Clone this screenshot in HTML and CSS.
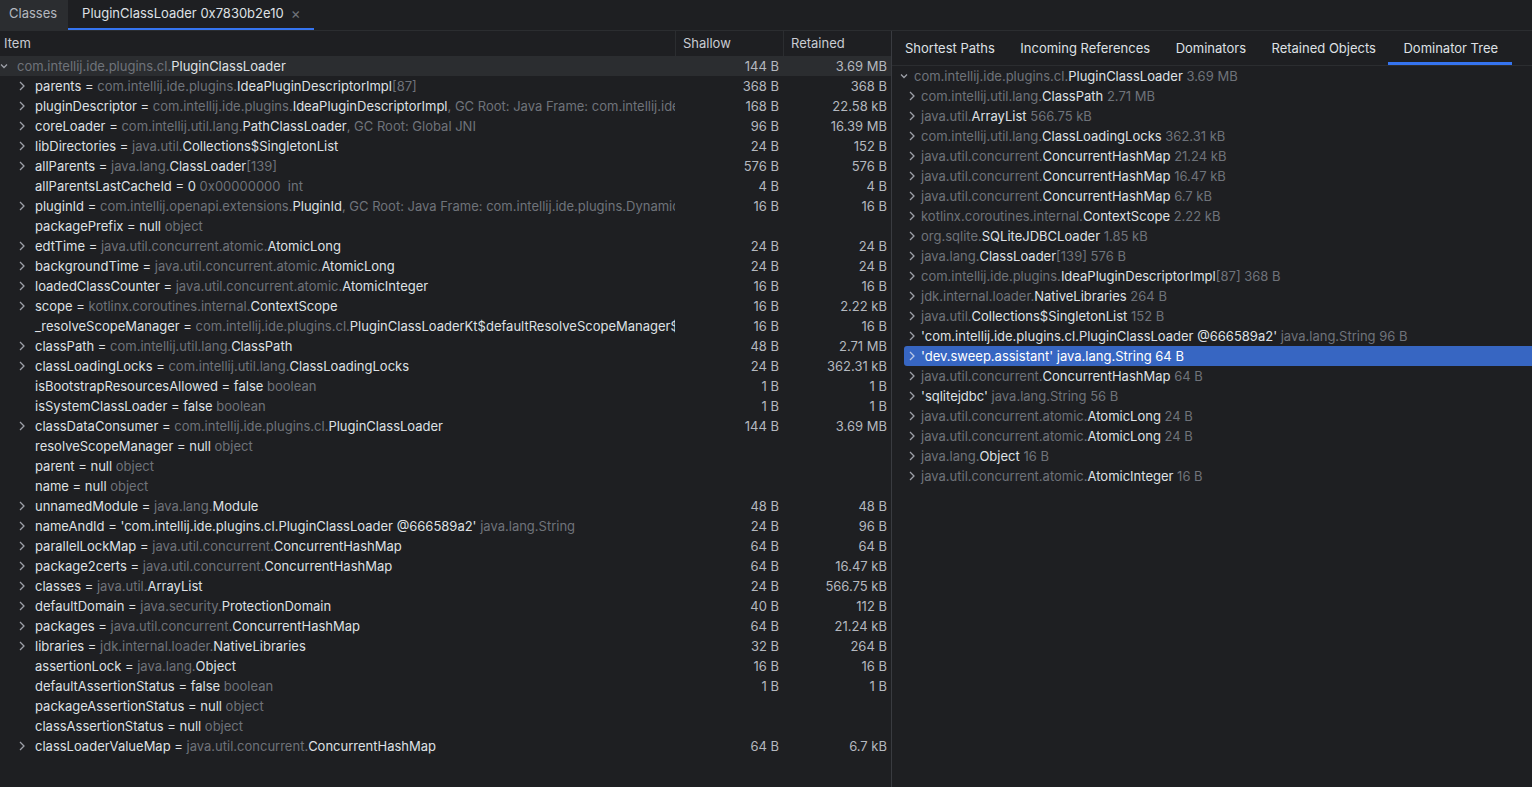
FILE: index.html
```html
<!DOCTYPE html>
<html lang="en">

<head>
  <meta charset="UTF-8">
  <title>PluginClassLoader 0x7830b2e10</title>
  <link rel="stylesheet" href="styles.css">
</head>

<body>

  <div class="tab-bar">
    <div class="tab">Classes</div>
    <div class="tab active">PluginClassLoader 0x7830b2e10 <span class="close">&#215;</span></div>
  </div>

  <div class="main">
    <!-- object fields -->
    <div class="left">
      <div class="head">
        <div class="col-item">Item</div>
        <div class="col-num">Shallow</div>
        <div class="col-num">Retained</div>
      </div>

      <div class="row hover">
        <div class="item d0"><span class="tog"><svg class="chev" viewBox="0 0 8 8"><path d="M1 2.5l3 3 3-3"/></svg></span><span class="dim">com.intellij.ide.plugins.cl.</span>PluginClassLoader</div>
        <div class="num">144 B</div><div class="num">3.69 MB</div>
      </div>
      <div class="row">
        <div class="item d1"><span class="tog"><svg class="chev" viewBox="0 0 8 10"><path d="M2 1l4 4-4 4"/></svg></span>parents = <span class="dim">com.intellij.ide.plugins.</span>IdeaPluginDescriptorImpl<span class="dim">[87]</span></div>
        <div class="num">368 B</div><div class="num">368 B</div>
      </div>
      <div class="row">
        <div class="item d1"><span class="tog"><svg class="chev" viewBox="0 0 8 10"><path d="M2 1l4 4-4 4"/></svg></span>pluginDescriptor = <span class="dim">com.intellij.ide.plugins.</span>IdeaPluginDescriptorImpl<span class="dim">, GC Root: Java Frame: com.intellij.ide</span></div>
        <div class="num">168 B</div><div class="num">22.58 kB</div>
      </div>
      <div class="row">
        <div class="item d1"><span class="tog"><svg class="chev" viewBox="0 0 8 10"><path d="M2 1l4 4-4 4"/></svg></span>coreLoader = <span class="dim">com.intellij.util.lang.</span>PathClassLoader<span class="dim">, GC Root: Global JNI</span></div>
        <div class="num">96 B</div><div class="num">16.39 MB</div>
      </div>
      <div class="row">
        <div class="item d1"><span class="tog"><svg class="chev" viewBox="0 0 8 10"><path d="M2 1l4 4-4 4"/></svg></span>libDirectories = <span class="dim">java.util.</span>Collections$SingletonList</div>
        <div class="num">24 B</div><div class="num">152 B</div>
      </div>
      <div class="row">
        <div class="item d1"><span class="tog"><svg class="chev" viewBox="0 0 8 10"><path d="M2 1l4 4-4 4"/></svg></span>allParents = <span class="dim">java.lang.</span>ClassLoader<span class="dim">[139]</span></div>
        <div class="num">576 B</div><div class="num">576 B</div>
      </div>
      <div class="row">
        <div class="item d1"><span class="tog"></span>allParentsLastCacheId = 0 <span class="dim">0x00000000&nbsp; int</span></div>
        <div class="num">4 B</div><div class="num">4 B</div>
      </div>
      <div class="row">
        <div class="item d1"><span class="tog"><svg class="chev" viewBox="0 0 8 10"><path d="M2 1l4 4-4 4"/></svg></span>pluginId = <span class="dim">com.intellij.openapi.extensions.</span>PluginId<span class="dim">, GC Root: Java Frame: com.intellij.ide.plugins.Dynamic</span></div>
        <div class="num">16 B</div><div class="num">16 B</div>
      </div>
      <div class="row">
        <div class="item d1"><span class="tog"></span>packagePrefix = null <span class="dim">object</span></div>
        <div class="num"></div><div class="num"></div>
      </div>
      <div class="row">
        <div class="item d1"><span class="tog"><svg class="chev" viewBox="0 0 8 10"><path d="M2 1l4 4-4 4"/></svg></span>edtTime = <span class="dim">java.util.concurrent.atomic.</span>AtomicLong</div>
        <div class="num">24 B</div><div class="num">24 B</div>
      </div>
      <div class="row">
        <div class="item d1"><span class="tog"><svg class="chev" viewBox="0 0 8 10"><path d="M2 1l4 4-4 4"/></svg></span>backgroundTime = <span class="dim">java.util.concurrent.atomic.</span>AtomicLong</div>
        <div class="num">24 B</div><div class="num">24 B</div>
      </div>
      <div class="row">
        <div class="item d1"><span class="tog"><svg class="chev" viewBox="0 0 8 10"><path d="M2 1l4 4-4 4"/></svg></span>loadedClassCounter = <span class="dim">java.util.concurrent.atomic.</span>AtomicInteger</div>
        <div class="num">16 B</div><div class="num">16 B</div>
      </div>
      <div class="row">
        <div class="item d1"><span class="tog"><svg class="chev" viewBox="0 0 8 10"><path d="M2 1l4 4-4 4"/></svg></span>scope = <span class="dim">kotlinx.coroutines.internal.</span>ContextScope</div>
        <div class="num">16 B</div><div class="num">2.22 kB</div>
      </div>
      <div class="row">
        <div class="item d1"><span class="tog"></span>_resolveScopeManager = <span class="dim">com.intellij.ide.plugins.cl.</span>PluginClassLoaderKt$defaultResolveScopeManager$</div>
        <div class="num">16 B</div><div class="num">16 B</div>
      </div>
      <div class="row">
        <div class="item d1"><span class="tog"><svg class="chev" viewBox="0 0 8 10"><path d="M2 1l4 4-4 4"/></svg></span>classPath = <span class="dim">com.intellij.util.lang.</span>ClassPath</div>
        <div class="num">48 B</div><div class="num">2.71 MB</div>
      </div>
      <div class="row">
        <div class="item d1"><span class="tog"><svg class="chev" viewBox="0 0 8 10"><path d="M2 1l4 4-4 4"/></svg></span>classLoadingLocks = <span class="dim">com.intellij.util.lang.</span>ClassLoadingLocks</div>
        <div class="num">24 B</div><div class="num">362.31 kB</div>
      </div>
      <div class="row">
        <div class="item d1"><span class="tog"></span>isBootstrapResourcesAllowed = false <span class="dim">boolean</span></div>
        <div class="num">1 B</div><div class="num">1 B</div>
      </div>
      <div class="row">
        <div class="item d1"><span class="tog"></span>isSystemClassLoader = false <span class="dim">boolean</span></div>
        <div class="num">1 B</div><div class="num">1 B</div>
      </div>
      <div class="row">
        <div class="item d1"><span class="tog"><svg class="chev" viewBox="0 0 8 10"><path d="M2 1l4 4-4 4"/></svg></span>classDataConsumer = <span class="dim">com.intellij.ide.plugins.cl.</span>PluginClassLoader</div>
        <div class="num">144 B</div><div class="num">3.69 MB</div>
      </div>
      <div class="row">
        <div class="item d1"><span class="tog"></span>resolveScopeManager = null <span class="dim">object</span></div>
        <div class="num"></div><div class="num"></div>
      </div>
      <div class="row">
        <div class="item d1"><span class="tog"></span>parent = null <span class="dim">object</span></div>
        <div class="num"></div><div class="num"></div>
      </div>
      <div class="row">
        <div class="item d1"><span class="tog"></span>name = null <span class="dim">object</span></div>
        <div class="num"></div><div class="num"></div>
      </div>
      <div class="row">
        <div class="item d1"><span class="tog"><svg class="chev" viewBox="0 0 8 10"><path d="M2 1l4 4-4 4"/></svg></span>unnamedModule = <span class="dim">java.lang.</span>Module</div>
        <div class="num">48 B</div><div class="num">48 B</div>
      </div>
      <div class="row">
        <div class="item d1"><span class="tog"><svg class="chev" viewBox="0 0 8 10"><path d="M2 1l4 4-4 4"/></svg></span>nameAndId = 'com.intellij.ide.plugins.cl.PluginClassLoader @666589a2' <span class="dim">java.lang.String</span></div>
        <div class="num">24 B</div><div class="num">96 B</div>
      </div>
      <div class="row">
        <div class="item d1"><span class="tog"><svg class="chev" viewBox="0 0 8 10"><path d="M2 1l4 4-4 4"/></svg></span>parallelLockMap = <span class="dim">java.util.concurrent.</span>ConcurrentHashMap</div>
        <div class="num">64 B</div><div class="num">64 B</div>
      </div>
      <div class="row">
        <div class="item d1"><span class="tog"><svg class="chev" viewBox="0 0 8 10"><path d="M2 1l4 4-4 4"/></svg></span>package2certs = <span class="dim">java.util.concurrent.</span>ConcurrentHashMap</div>
        <div class="num">64 B</div><div class="num">16.47 kB</div>
      </div>
      <div class="row">
        <div class="item d1"><span class="tog"><svg class="chev" viewBox="0 0 8 10"><path d="M2 1l4 4-4 4"/></svg></span>classes = <span class="dim">java.util.</span>ArrayList</div>
        <div class="num">24 B</div><div class="num">566.75 kB</div>
      </div>
      <div class="row">
        <div class="item d1"><span class="tog"><svg class="chev" viewBox="0 0 8 10"><path d="M2 1l4 4-4 4"/></svg></span>defaultDomain = <span class="dim">java.security.</span>ProtectionDomain</div>
        <div class="num">40 B</div><div class="num">112 B</div>
      </div>
      <div class="row">
        <div class="item d1"><span class="tog"><svg class="chev" viewBox="0 0 8 10"><path d="M2 1l4 4-4 4"/></svg></span>packages = <span class="dim">java.util.concurrent.</span>ConcurrentHashMap</div>
        <div class="num">64 B</div><div class="num">21.24 kB</div>
      </div>
      <div class="row">
        <div class="item d1"><span class="tog"><svg class="chev" viewBox="0 0 8 10"><path d="M2 1l4 4-4 4"/></svg></span>libraries = <span class="dim">jdk.internal.loader.</span>NativeLibraries</div>
        <div class="num">32 B</div><div class="num">264 B</div>
      </div>
      <div class="row">
        <div class="item d1"><span class="tog"></span>assertionLock = <span class="dim">java.lang.</span>Object</div>
        <div class="num">16 B</div><div class="num">16 B</div>
      </div>
      <div class="row">
        <div class="item d1"><span class="tog"></span>defaultAssertionStatus = false <span class="dim">boolean</span></div>
        <div class="num">1 B</div><div class="num">1 B</div>
      </div>
      <div class="row">
        <div class="item d1"><span class="tog"></span>packageAssertionStatus = null <span class="dim">object</span></div>
        <div class="num"></div><div class="num"></div>
      </div>
      <div class="row">
        <div class="item d1"><span class="tog"></span>classAssertionStatus = null <span class="dim">object</span></div>
        <div class="num"></div><div class="num"></div>
      </div>
      <div class="row">
        <div class="item d1"><span class="tog"><svg class="chev" viewBox="0 0 8 10"><path d="M2 1l4 4-4 4"/></svg></span>classLoaderValueMap = <span class="dim">java.util.concurrent.</span>ConcurrentHashMap</div>
        <div class="num">64 B</div><div class="num">6.7 kB</div>
      </div>
    </div>

    <!-- dominator tree -->
    <div class="right">
      <div class="sub-tabs">
        <div class="sub-tab">Shortest Paths</div>
        <div class="sub-tab">Incoming References</div>
        <div class="sub-tab">Dominators</div>
        <div class="sub-tab">Retained Objects</div>
        <div class="sub-tab active">Dominator Tree</div>
      </div>

      <div class="tree">
        <div class="node root"><span class="tog"><svg class="chev" viewBox="0 0 8 8"><path d="M1 2.5l3 3 3-3"/></svg></span><span class="dim">com.intellij.ide.plugins.cl.</span>PluginClassLoader <span class="dim">3.69 MB</span></div>
        <div class="node"><span class="tog"><svg class="chev" viewBox="0 0 8 10"><path d="M2 1l4 4-4 4"/></svg></span><span class="dim">com.intellij.util.lang.</span>ClassPath <span class="dim">2.71 MB</span></div>
        <div class="node"><span class="tog"><svg class="chev" viewBox="0 0 8 10"><path d="M2 1l4 4-4 4"/></svg></span><span class="dim">java.util.</span>ArrayList <span class="dim">566.75 kB</span></div>
        <div class="node"><span class="tog"><svg class="chev" viewBox="0 0 8 10"><path d="M2 1l4 4-4 4"/></svg></span><span class="dim">com.intellij.util.lang.</span>ClassLoadingLocks <span class="dim">362.31 kB</span></div>
        <div class="node"><span class="tog"><svg class="chev" viewBox="0 0 8 10"><path d="M2 1l4 4-4 4"/></svg></span><span class="dim">java.util.concurrent.</span>ConcurrentHashMap <span class="dim">21.24 kB</span></div>
        <div class="node"><span class="tog"><svg class="chev" viewBox="0 0 8 10"><path d="M2 1l4 4-4 4"/></svg></span><span class="dim">java.util.concurrent.</span>ConcurrentHashMap <span class="dim">16.47 kB</span></div>
        <div class="node"><span class="tog"><svg class="chev" viewBox="0 0 8 10"><path d="M2 1l4 4-4 4"/></svg></span><span class="dim">java.util.concurrent.</span>ConcurrentHashMap <span class="dim">6.7 kB</span></div>
        <div class="node"><span class="tog"><svg class="chev" viewBox="0 0 8 10"><path d="M2 1l4 4-4 4"/></svg></span><span class="dim">kotlinx.coroutines.internal.</span>ContextScope <span class="dim">2.22 kB</span></div>
        <div class="node"><span class="tog"><svg class="chev" viewBox="0 0 8 10"><path d="M2 1l4 4-4 4"/></svg></span><span class="dim">org.sqlite.</span>SQLiteJDBCLoader <span class="dim">1.85 kB</span></div>
        <div class="node"><span class="tog"><svg class="chev" viewBox="0 0 8 10"><path d="M2 1l4 4-4 4"/></svg></span><span class="dim">java.lang.</span>ClassLoader<span class="dim">[139] 576 B</span></div>
        <div class="node"><span class="tog"><svg class="chev" viewBox="0 0 8 10"><path d="M2 1l4 4-4 4"/></svg></span><span class="dim">com.intellij.ide.plugins.</span>IdeaPluginDescriptorImpl<span class="dim">[87] 368 B</span></div>
        <div class="node"><span class="tog"><svg class="chev" viewBox="0 0 8 10"><path d="M2 1l4 4-4 4"/></svg></span><span class="dim">jdk.internal.loader.</span>NativeLibraries <span class="dim">264 B</span></div>
        <div class="node"><span class="tog"><svg class="chev" viewBox="0 0 8 10"><path d="M2 1l4 4-4 4"/></svg></span><span class="dim">java.util.</span>Collections$SingletonList <span class="dim">152 B</span></div>
        <div class="node"><span class="tog"><svg class="chev" viewBox="0 0 8 10"><path d="M2 1l4 4-4 4"/></svg></span>'com.intellij.ide.plugins.cl.PluginClassLoader @666589a2' <span class="dim">java.lang.String 96 B</span></div>
        <div class="node selected"><span class="tog"><svg class="chev" viewBox="0 0 8 10"><path d="M2 1l4 4-4 4"/></svg></span>'dev.sweep.assistant' java.lang.String 64 B</div>
        <div class="node"><span class="tog"><svg class="chev" viewBox="0 0 8 10"><path d="M2 1l4 4-4 4"/></svg></span><span class="dim">java.util.concurrent.</span>ConcurrentHashMap <span class="dim">64 B</span></div>
        <div class="node"><span class="tog"><svg class="chev" viewBox="0 0 8 10"><path d="M2 1l4 4-4 4"/></svg></span>'sqlitejdbc' <span class="dim">java.lang.String 56 B</span></div>
        <div class="node"><span class="tog"><svg class="chev" viewBox="0 0 8 10"><path d="M2 1l4 4-4 4"/></svg></span><span class="dim">java.util.concurrent.atomic.</span>AtomicLong <span class="dim">24 B</span></div>
        <div class="node"><span class="tog"><svg class="chev" viewBox="0 0 8 10"><path d="M2 1l4 4-4 4"/></svg></span><span class="dim">java.util.concurrent.atomic.</span>AtomicLong <span class="dim">24 B</span></div>
        <div class="node"><span class="tog"><svg class="chev" viewBox="0 0 8 10"><path d="M2 1l4 4-4 4"/></svg></span><span class="dim">java.lang.</span>Object <span class="dim">16 B</span></div>
        <div class="node"><span class="tog"><svg class="chev" viewBox="0 0 8 10"><path d="M2 1l4 4-4 4"/></svg></span><span class="dim">java.util.concurrent.atomic.</span>AtomicInteger <span class="dim">16 B</span></div>
      </div>
    </div>
  </div>

</body>

</html>
```

FILE: styles.css
```css
body {
  margin: 0;
  height: 787px;
  overflow: hidden;
  background: #1e1f22;
  color: #dfe1e5;
  font-family: Inter, 'Noto Sans', sans-serif;
  font-size: 13px;
}

.dim {
  color: #6f737a;
}

/* top editor tabs */
.tab-bar {
  display: flex;
  height: 30px;
  border-bottom: 1px solid #2b2d30;
}

.tab {
  display: flex;
  align-items: center;
  padding: 0 11px 4px 9px;
  color: #b4b8bf;
  background: #2b2d30;
}

.tab.active {
  padding: 0 13px 4px 14px;
  color: #dfe1e5;
  background: #1e1f22;
  box-shadow: inset 0 -2px 0 #3574f0;
}

.close {
  margin-left: 7px;
  color: #6f737a;
  font-size: 15px;
}

.main {
  display: flex;
  height: 756px;
}

/* left table */
.left {
  width: 891px;
  border-right: 1px solid #393b40;
  overflow: hidden;
}

.head {
  display: grid;
  grid-template-columns: 675px 108px 108px;
  height: 25px;
  line-height: 24px;
  color: #c9ccd3;
}

.col-item {
  padding-left: 4px;
}

.col-num {
  padding-left: 7px;
  border-left: 1px solid #2b2d30;
}

.row {
  display: grid;
  grid-template-columns: 675px 108px 108px;
  height: 20px;
  line-height: 20px;
}

.row.hover {
  background: #2b2d30;
}

.item {
  display: flex;
  min-width: 0;
  white-space: pre;
  overflow: hidden;
}

.item.d1 {
  padding-left: 18px;
}

.tog {
  flex: none;
  width: 17px;
  display: flex;
  align-items: center;
}

.chev {
  width: 8px;
  height: 10px;
  fill: none;
  stroke: #9da0a8;
  stroke-width: 1.3;
}

.num {
  text-align: right;
  padding-right: 4px;
  color: #b4b8bf;
}

/* right panel */
.right {
  flex: 1;
  overflow: hidden;
}

.sub-tabs {
  display: flex;
  height: 35px;
  border-bottom: 1px solid #2b2d30;
  box-sizing: border-box;
}

.sub-tab {
  display: flex;
  align-items: center;
  padding: 0 12.5px 0 13px;
  color: #dfe1e5;
}

.sub-tab.active {
  padding: 0 14px 0 15px;
  box-shadow: inset 0 -3px 0 #3574f0;
}

.node {
  display: flex;
  height: 20px;
  line-height: 20px;
  margin-left: 12px;
  padding-left: 4px;
  white-space: pre;
  border-radius: 3px 0 0 3px;
}

.node.root {
  margin-left: 8px;
  padding-left: 0;
}

.node .tog {
  width: 13px;
}

.node.root .tog {
  width: 14px;
}

.node.selected {
  background: #3766c2;
  color: #ffffff;
}

.node.selected .chev {
  stroke: #b9c7e6;
}
```
